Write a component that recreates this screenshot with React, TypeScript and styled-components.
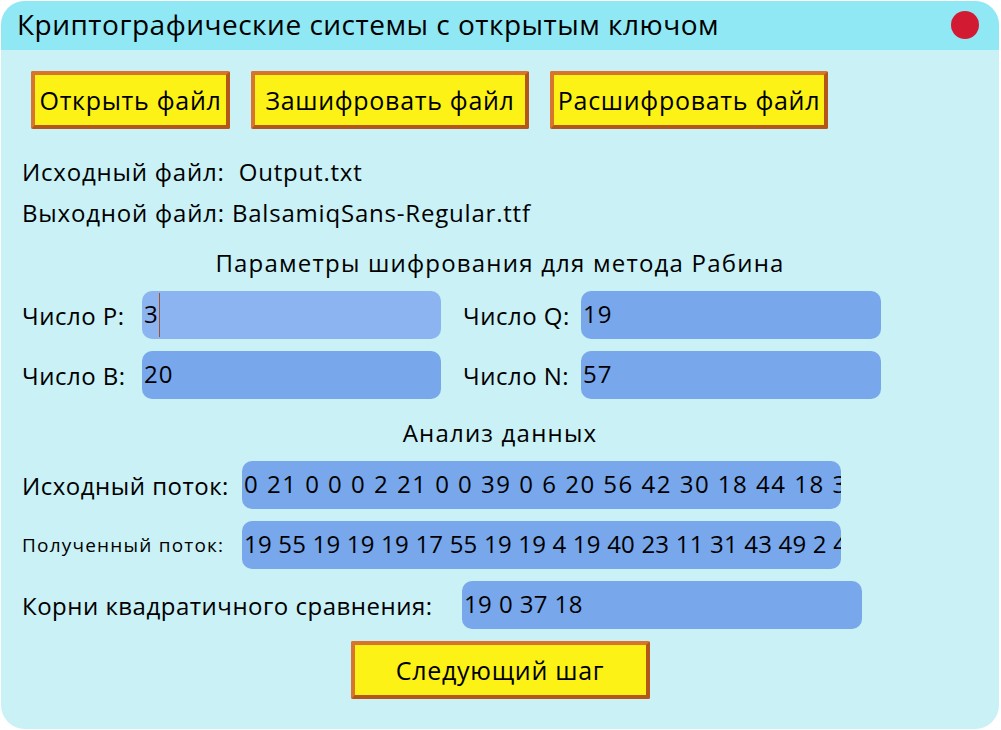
import React from "react";
import styled, { createGlobalStyle } from "styled-components";

const GlobalStyle = createGlobalStyle`
  html, body {
    margin: 0;
    padding: 0;
    background: #ffffff;
  }
  body {
    font-family: "Open Sans", "Noto Sans", sans-serif;
    color: #000;
  }
`;

const sourceStream =
  "0 21 0 0 0 2 21 0 0 39 0 6 20 56 42 30 18 44 18 30 0 21 0 0 2 21 0 39";
const resultStream =
  "19 55 19 19 19 17 55 19 19 4 19 40 23 11 31 43 49 2 49 19 55 19 19 17";

export default function App() {
  return (
    <>
      <GlobalStyle />
      <Window>
        <TitleBar>
          <Title>Криптографические системы с открытым ключом</Title>
          <CloseDot />
        </TitleBar>
        <Content>
          <ButtonRow>
            <ActionButton $width={199}>Открыть файл</ActionButton>
            <ActionButton $width={278}>Зашифровать файл</ActionButton>
            <ActionButton $width={278}>Расшифровать файл</ActionButton>
          </ButtonRow>

          <InfoBlock>
            <InfoLine>Исходный файл:&nbsp; Output.txt</InfoLine>
            <InfoLine>Выходной файл: BalsamiqSans-Regular.ttf</InfoLine>
          </InfoBlock>

          <SectionTitle>Параметры шифрования для метода Рабина</SectionTitle>

          <ParamGrid>
            <Label>Число P:</Label>
            <Field $active>
              3
              <Caret />
            </Field>
            <Label $indent>Число Q:</Label>
            <Field>19</Field>
            <Label>Число B:</Label>
            <Field>20</Field>
            <Label $indent>Число N:</Label>
            <Field>57</Field>
          </ParamGrid>

          <SectionTitle $gap={14}>Анализ данных</SectionTitle>

          <StreamList>
            <StreamRow>
              <Label $width={220}>Исходный поток:</Label>
              <Field $width={599} $spacing={1.5}>
                {sourceStream}
              </Field>
            </StreamRow>
            <StreamRow>
              <Label $width={220} $small>
                Полученный поток:
              </Label>
              <Field $width={599} $spacing={0.2}>
                {resultStream}
              </Field>
            </StreamRow>
            <StreamRow>
              <Label $width={440}>Корни квадратичного сравнения:</Label>
              <Field $width={400} $spacing={0.4}>
                19 0 37 18
              </Field>
            </StreamRow>
          </StreamList>

          <Footer>
            <ActionButton $width={299}>Следующий шаг</ActionButton>
          </Footer>
        </Content>
      </Window>
    </>
  );
}

const Window = styled.div`
  margin: 1px 0 0 1px;
  width: 998px;
  height: 728px;
  border-radius: 24px;
  overflow: hidden;
  background: #c9f1f6;
  display: flex;
  flex-direction: column;
`;

const TitleBar = styled.div`
  height: 49px;
  flex-shrink: 0;
  background: #8fe8f4;
  display: flex;
  align-items: center;
  justify-content: space-between;
  padding: 0 20px 0 16px;
`;

const Title = styled.h1`
  margin: 0;
  font-size: 28px;
  font-weight: 400;
  letter-spacing: 0.5px;
  line-height: 1;
  padding-bottom: 3px;
`;

const CloseDot = styled.span`
  width: 28px;
  height: 28px;
  border-radius: 50%;
  background: #d21b33;
  margin-top: -2px;
`;

const Content = styled.div`
  display: flex;
  flex-direction: column;
  padding-top: 21px;
`;

const ButtonRow = styled.div`
  display: flex;
  gap: 21px;
  padding-left: 30px;
`;

const ActionButton = styled.button<{ $width: number }>`
  width: ${(p) => p.$width}px;
  height: 58px;
  box-sizing: border-box;
  background: #fcf216;
  border: 4px solid;
  border-color: #d7742e #b45617 #b45617 #d7742e;
  border-radius: 2px;
  font-family: "Open Sans", "Noto Sans", sans-serif;
  font-size: 25px;
  letter-spacing: 0.7px;
  color: #000;
  padding: 0;
  white-space: nowrap;
  cursor: pointer;
`;

const InfoBlock = styled.div`
  margin-top: 22px;
  padding-left: 21px;
`;

const InfoLine = styled.div`
  height: 41px;
  line-height: 41px;
  font-size: 24px;
  letter-spacing: 0.8px;
`;

const SectionTitle = styled.div<{ $gap?: number }>`
  margin-top: ${(p) => p.$gap ?? 10}px;
  height: 40px;
  line-height: 40px;
  text-align: center;
  font-size: 24px;
  letter-spacing: 1.2px;
`;

const ParamGrid = styled.div`
  margin-top: 8px;
  padding-left: 21px;
  display: grid;
  grid-template-columns: 120px 299px 140px 300px;
  grid-auto-rows: 48px;
  row-gap: 12px;
`;

const Label = styled.div<{
  $indent?: boolean;
  $width?: number;
  $small?: boolean;
}>`
  align-self: center;
  ${(p) => (p.$width ? `width: ${p.$width}px; flex-shrink: 0;` : "")}
  padding-left: ${(p) => (p.$indent ? 22 : 0)}px;
  font-size: ${(p) => (p.$small ? 19 : 24)}px;
  letter-spacing: ${(p) => (p.$small ? 1.2 : 0.5)}px;
  white-space: nowrap;
`;

const Field = styled.div<{ $active?: boolean; $width?: number; $spacing?: number }>`
  position: relative;
  ${(p) => (p.$width ? `width: ${p.$width}px; flex-shrink: 0;` : "")}
  height: 48px;
  box-sizing: border-box;
  padding: 0 2px 4px;
  border-radius: 10px;
  background: ${(p) => (p.$active ? "#8cb4f0" : "#78a7eb")};
  display: flex;
  align-items: center;
  font-size: 24px;
  letter-spacing: ${(p) => p.$spacing ?? 1}px;
  white-space: nowrap;
  overflow: hidden;
`;

const Caret = styled.span`
  display: inline-block;
  width: 1px;
  height: 44px;
  margin: 4px 0 0 0;
  background: #a0522d;
`;

const StreamList = styled.div`
  margin-top: 8px;
  padding-left: 21px;
  display: flex;
  flex-direction: column;
  gap: 12px;
`;

const StreamRow = styled.div`
  display: flex;
  align-items: center;
`;

const Footer = styled.div`
  margin-top: 12px;
  display: flex;
  justify-content: center;
`;
